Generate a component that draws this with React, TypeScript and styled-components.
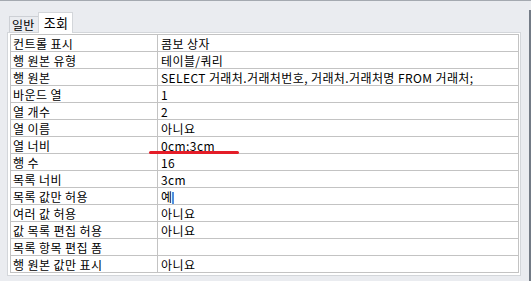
import styled, { createGlobalStyle } from 'styled-components';

const GlobalStyle = createGlobalStyle`
  html, body {
    margin: 0;
    padding: 0;
    background: #eaecf0;
  }
  body {
    font-family: "Noto Sans CJK KR", "Noto Sans", sans-serif;
    font-size: 12px;
    color: #000;
  }
`;

const rows: [string, string][] = [
  ['컨트롤 표시', '콤보 상자'],
  ['행 원본 유형', '테이블/쿼리'],
  ['행 원본', 'SELECT 거래처.거래처번호, 거래처.거래처명 FROM 거래처;'],
  ['바운드 열', '1'],
  ['열 개수', '2'],
  ['열 이름', '아니요'],
  ['열 너비', '0cm;3cm'],
  ['행 수', '16'],
  ['목록 너비', '3cm'],
  ['목록 값만 허용', '예'],
  ['여러 값 허용', '아니요'],
  ['값 목록 편집 허용', '아니요'],
  ['목록 항목 편집 폼', ''],
  ['행 원본 값만 표시', '아니요'],
];

const Window = styled.div`
  display: flex;
  width: 531px;
  height: 281px;
  border-top: 1px solid #a4a9b0;
  box-sizing: border-box;
  background: #eaecf0;
  overflow: hidden;
`;

const Main = styled.div`
  flex: 1;
  display: flex;
  flex-direction: column;
  padding-left: 7px;
`;

const EdgeLine = styled.div`
  width: 2px;
  margin-top: 9px;
  background: #737b86;
`;

const TabStrip = styled.div`
  display: flex;
  align-items: flex-end;
  height: 31px;
  padding-left: 2px;
`;

const Tab = styled.div<{ $active?: boolean }>`
  display: flex;
  align-items: center;
  box-sizing: border-box;
  height: ${(p) => (p.$active ? '21px' : '16px')};
  padding: ${(p) => (p.$active ? '0 4px 0 5px' : '0 3px 0 2px')};
  background: ${(p) => (p.$active ? '#ffffff' : 'transparent')};
  border: 1px solid ${(p) => (p.$active ? '#d3d6da' : '#cdd0d5')};
  border-bottom: none;
  border-right: ${(p) => (p.$active ? '1px solid #d3d6da' : 'none')};
  font-size: ${(p) => (p.$active ? '13px' : '12px')};
  letter-spacing: 0.3px;
  line-height: 16px;
  margin-bottom: ${(p) => (p.$active ? '-1px' : '0')};
  position: relative;
`;

const Panel = styled.div`
  width: 514px;
  height: 244px;
  box-sizing: border-box;
  background: #ffffff;
  border: 1px solid #d3d6da;
  padding: 1px 1px 0 2px;
`;

const Grid = styled.div`
  display: grid;
  grid-template-columns: 146px 361px;
  border-top: 1px solid #c3c3c3;
  border-left: 1px solid #c3c3c3;
  border-right: 1px solid #c3c3c3;
  width: 509px;
  box-sizing: border-box;
`;

const Cell = styled.div<{ $value?: boolean }>`
  position: relative;
  height: 17px;
  box-sizing: border-box;
  border-bottom: 1px solid #c3c3c3;
  border-left: ${(p) => (p.$value ? '1px solid #c3c3c3' : 'none')};
  padding-left: ${(p) => (p.$value ? '3px' : '2px')};
  line-height: 17px;
  letter-spacing: 0.4px;
  white-space: nowrap;
`;

const RedMark = styled.div`
  position: absolute;
  left: -9px;
  top: 14px;
  width: 90px;
  height: 3px;
  border-radius: 2px;
  background: #e41d28;
  z-index: 2;
`;

const Caret = styled.span`
  display: inline-block;
  width: 2px;
  height: 12px;
  margin-left: 0;
  vertical-align: -2px;
  background: #4f8fde;
`;

export default function App() {
  return (
    <>
      <GlobalStyle />
      <Window>
        <Main>
          <TabStrip>
            <Tab>일반</Tab>
            <Tab $active>조회</Tab>
          </TabStrip>
          <Panel>
            <Grid>
              {rows.map(([label, value]) => (
                <>
                  <Cell key={label + '-l'}>{label}</Cell>
                  <Cell key={label + '-v'} $value>
                    {value}
                    {label === '목록 값만 허용' && <Caret />}
                    {label === '열 너비' && <RedMark />}
                  </Cell>
                </>
              ))}
            </Grid>
          </Panel>
        </Main>
        <EdgeLine />
      </Window>
    </>
  );
}
